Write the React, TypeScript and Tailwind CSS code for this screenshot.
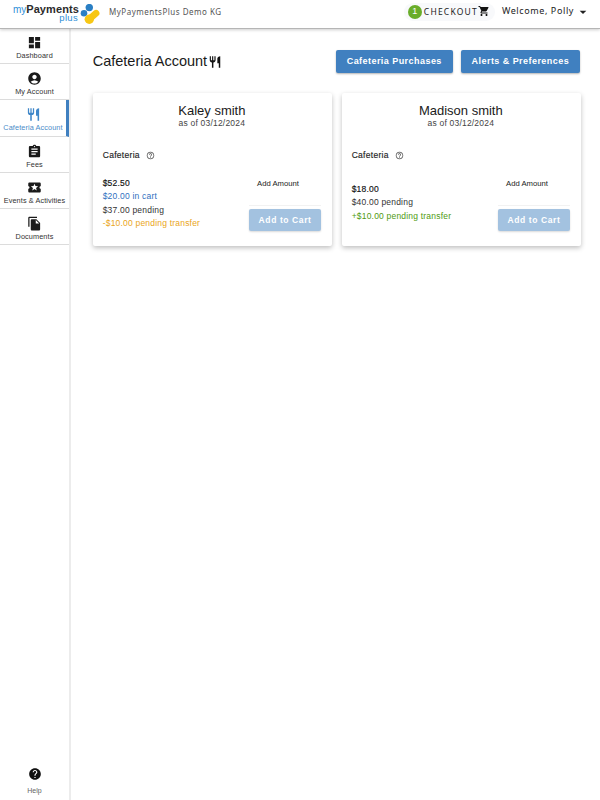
import { MdDashboard, MdAccountCircle, MdRestaurant, MdAssignment, MdLocalActivity, MdFileCopy, MdHelp, MdShoppingCart, MdArrowDropDown, MdHelpOutline } from 'react-icons/md';
import type { ReactNode } from 'react';

const sans = "font-['Liberation_Sans',Arial,sans-serif]";

function Logo() {
  return (
    <div className="flex items-start">
      <div className="flex flex-col items-end w-[66px] pt-[1px]">
        <div className="text-[11px] leading-[9px] whitespace-nowrap">
          <span className="text-[#2f8fd8] text-[10px]">my</span>
          <span className="text-[#2b2b2b] font-bold tracking-[0.1px]">Payments</span>
        </div>
        <div className="text-[9.5px] leading-[8px] text-[#2f8fd8] tracking-[0.3px] pr-[1px]">plus</div>
      </div>
      <svg width="20" height="21" viewBox="0 0 20 21" className="ml-[1px]">
        <circle cx="9.3" cy="3.6" r="3.7" fill="#2a7fc4" />
        <circle cx="4" cy="9.3" r="3.3" fill="#2a7fc4" />
        <line x1="16" y1="9.3" x2="10" y2="14.5" stroke="#f7c715" strokeWidth="6.8" strokeLinecap="round" />
        <circle cx="9.3" cy="15.3" r="4.7" fill="#f7c715" />
      </svg>
    </div>
  );
}

function NavItem({ icon, label, active }: { icon: ReactNode; label: string; active?: boolean }) {
  return (
    <div className={`h-[36.2px] flex flex-col items-center pt-[7px] border-b border-[#dcdcdc] ${active ? 'border-r-[3px] border-r-[#4080c0] text-[#3f87c9]' : 'text-[#1a1a1a]'}`}>
      <div className="text-[15px] leading-[13px]">{icon}</div>
      <div className={`text-[7.3px] leading-[9px] mt-[1px] whitespace-nowrap tracking-[0.1px] ${active ? 'text-[#4a8cc9]' : 'text-[#333333]'}`}>{label}</div>
    </div>
  );
}

function Card({ name, lines, offset }: { name: string; lines: { text: string; cls: string }[]; offset?: boolean }) {
  return (
    <div className="bg-white rounded-[2px] h-[153.6px] shadow-[0_2px_5px_rgba(0,0,0,0.25)] pl-[10px] pr-[11px] pt-[10px]">
      <div className="text-center text-[13px] leading-[15px] text-[#1a1a1a]">{name}</div>
      <div className="text-center text-[8.5px] leading-[11px] text-[#444444] tracking-[0.2px]">as of 03/12/2024</div>
      <div className="flex items-center mt-[21px] h-[12px] text-[8.5px] [-webkit-text-stroke:0.15px] text-[#222222] tracking-[0.3px]">
        Cafeteria
        <MdHelpOutline className="ml-[6px] text-[9px] text-[#555555]" />
      </div>
      <div className="flex justify-between mt-[15px]">
        <div className={`${offset ? 'pt-[6px]' : ''} text-[8.5px] leading-[13.4px] tracking-[0.2px]`}>
          {lines.map((l) => (
            <div key={l.text} className={l.cls}>{l.text}</div>
          ))}
        </div>
        <div className="w-[72px] flex flex-col">
          <div className="pl-[8px] pt-[1px] text-[7.7px] leading-[11px] text-[#222222]">Add Amount</div>
          <div className="h-[17px] border-b border-[#f2f2f2]" />
          <div className="mt-[3px] h-[22px] pt-[1px] rounded-[2px] bg-[#a3c2e0] text-white text-[8.5px] font-bold tracking-[0.6px] flex items-center justify-center shadow-[0_1px_2px_rgba(0,0,0,0.15)]">
            Add to Cart
          </div>
        </div>
      </div>
    </div>
  );
}

export default function App() {
  return (
    <div className={`${sans} w-[600px] h-[800px] bg-white flex flex-col overflow-hidden`}>
      <header className="h-[29px] shrink-0 flex items-center pl-[13px] pr-[9px] border-b border-[#b5b5b5] shadow-[0_1px_3px_rgba(0,0,0,0.2)] relative z-10 bg-white">
        <Logo />
        <div className="ml-[9px] text-[8px] text-[#555555] tracking-[0.5px] font-['Noto_Sans',sans-serif] mb-[5px]">MyPaymentsPlus Demo KG</div>
        <div className="ml-auto flex items-center rounded-full bg-[#f8f9fb] h-[18px] pl-[4px] pr-[5px] mb-[5px]">
          <div className="w-[14px] h-[14px] rounded-full bg-[#69ad2a] text-white text-[9px] flex items-center justify-center">1</div>
          <div className="ml-[2px] mt-[1px] text-[8.5px] tracking-[1.2px] text-[#222222] font-['Noto_Sans',sans-serif]">CHECKOUT</div>
          <MdShoppingCart className="text-[12px] text-[#111111] mb-[1px]" />
        </div>
        <div className="ml-[7px] mb-[6px] text-[9px] tracking-[0.6px] text-[#222222] font-['Noto_Sans',sans-serif]">Welcome, Polly</div>
        <MdArrowDropDown className="ml-[1px] mb-[5px] text-[16px] text-[#222222]" />
      </header>
      <div className="flex flex-1 min-h-0">
        <aside className="w-[71px] shrink-0 mt-[-1px] border-r-2 border-[#ececec] flex flex-col">
          <NavItem icon={<MdDashboard />} label="Dashboard" />
          <NavItem icon={<MdAccountCircle />} label="My Account" />
          <NavItem icon={<MdRestaurant className="text-[#3f87c9]" />} label="Cafeteria Account" active />
          <NavItem icon={<MdAssignment />} label="Fees" />
          <NavItem icon={<MdLocalActivity />} label="Events & Activities" />
          <NavItem icon={<MdFileCopy />} label="Documents" />
          <div className="mt-auto h-[36px] flex flex-col items-center pt-[3px] pb-[2px]">
            <MdHelp className="text-[14px] text-[#111111]" />
            <div className="text-[7px] leading-[9px] mt-[5px] text-[#666666]">Help</div>
          </div>
        </aside>
        <main className="flex-1 pl-[21.7px] pr-[19px] pt-[21.3px]">
          <div className="flex items-center h-[22.4px]">
            <h1 className="flex items-center text-[14.5px] text-[#1a1a1a] mt-[1px]">
              Cafeteria Account
              <MdRestaurant className="text-[14px] ml-[1px] text-[#111111]" />
            </h1>
            <div className="ml-auto mr-[1px] flex gap-[7.7px]">
              <div className="w-[117.5px] h-[22.4px] pt-[1px] rounded-[2px] bg-[#4080c0] text-white text-[9px] font-bold tracking-[0.45px] flex items-center justify-center shadow-[0_1px_2px_rgba(0,0,0,0.3)]">Cafeteria Purchases</div>
              <div className="w-[119.3px] h-[22.4px] pt-[1px] rounded-[2px] bg-[#4080c0] text-white text-[9px] font-bold tracking-[0.45px] flex items-center justify-center shadow-[0_1px_2px_rgba(0,0,0,0.3)]">Alerts & Preferences</div>
            </div>
          </div>
          <div className="grid grid-cols-2 gap-[9.6px] mt-[20px]">
            <Card
              name="Kaley smith"
              lines={[
                { text: '$52.50', cls: 'text-[#111111] [-webkit-text-stroke:0.15px]' },
                { text: '$20.00 in cart', cls: 'text-[#2f6fc0]' },
                { text: '$37.00 pending', cls: 'text-[#333333]' },
                { text: '-$10.00 pending transfer', cls: 'text-[#eaa520]' },
              ]}
            />
            <Card
              name="Madison smith"
              offset
              lines={[
                { text: '$18.00', cls: 'text-[#111111] [-webkit-text-stroke:0.15px]' },
                { text: '$40.00 pending', cls: 'text-[#333333]' },
                { text: '+$10.00 pending transfer', cls: 'text-[#4f9a10]' },
              ]}
            />
          </div>
        </main>
      </div>
    </div>
  );
}
